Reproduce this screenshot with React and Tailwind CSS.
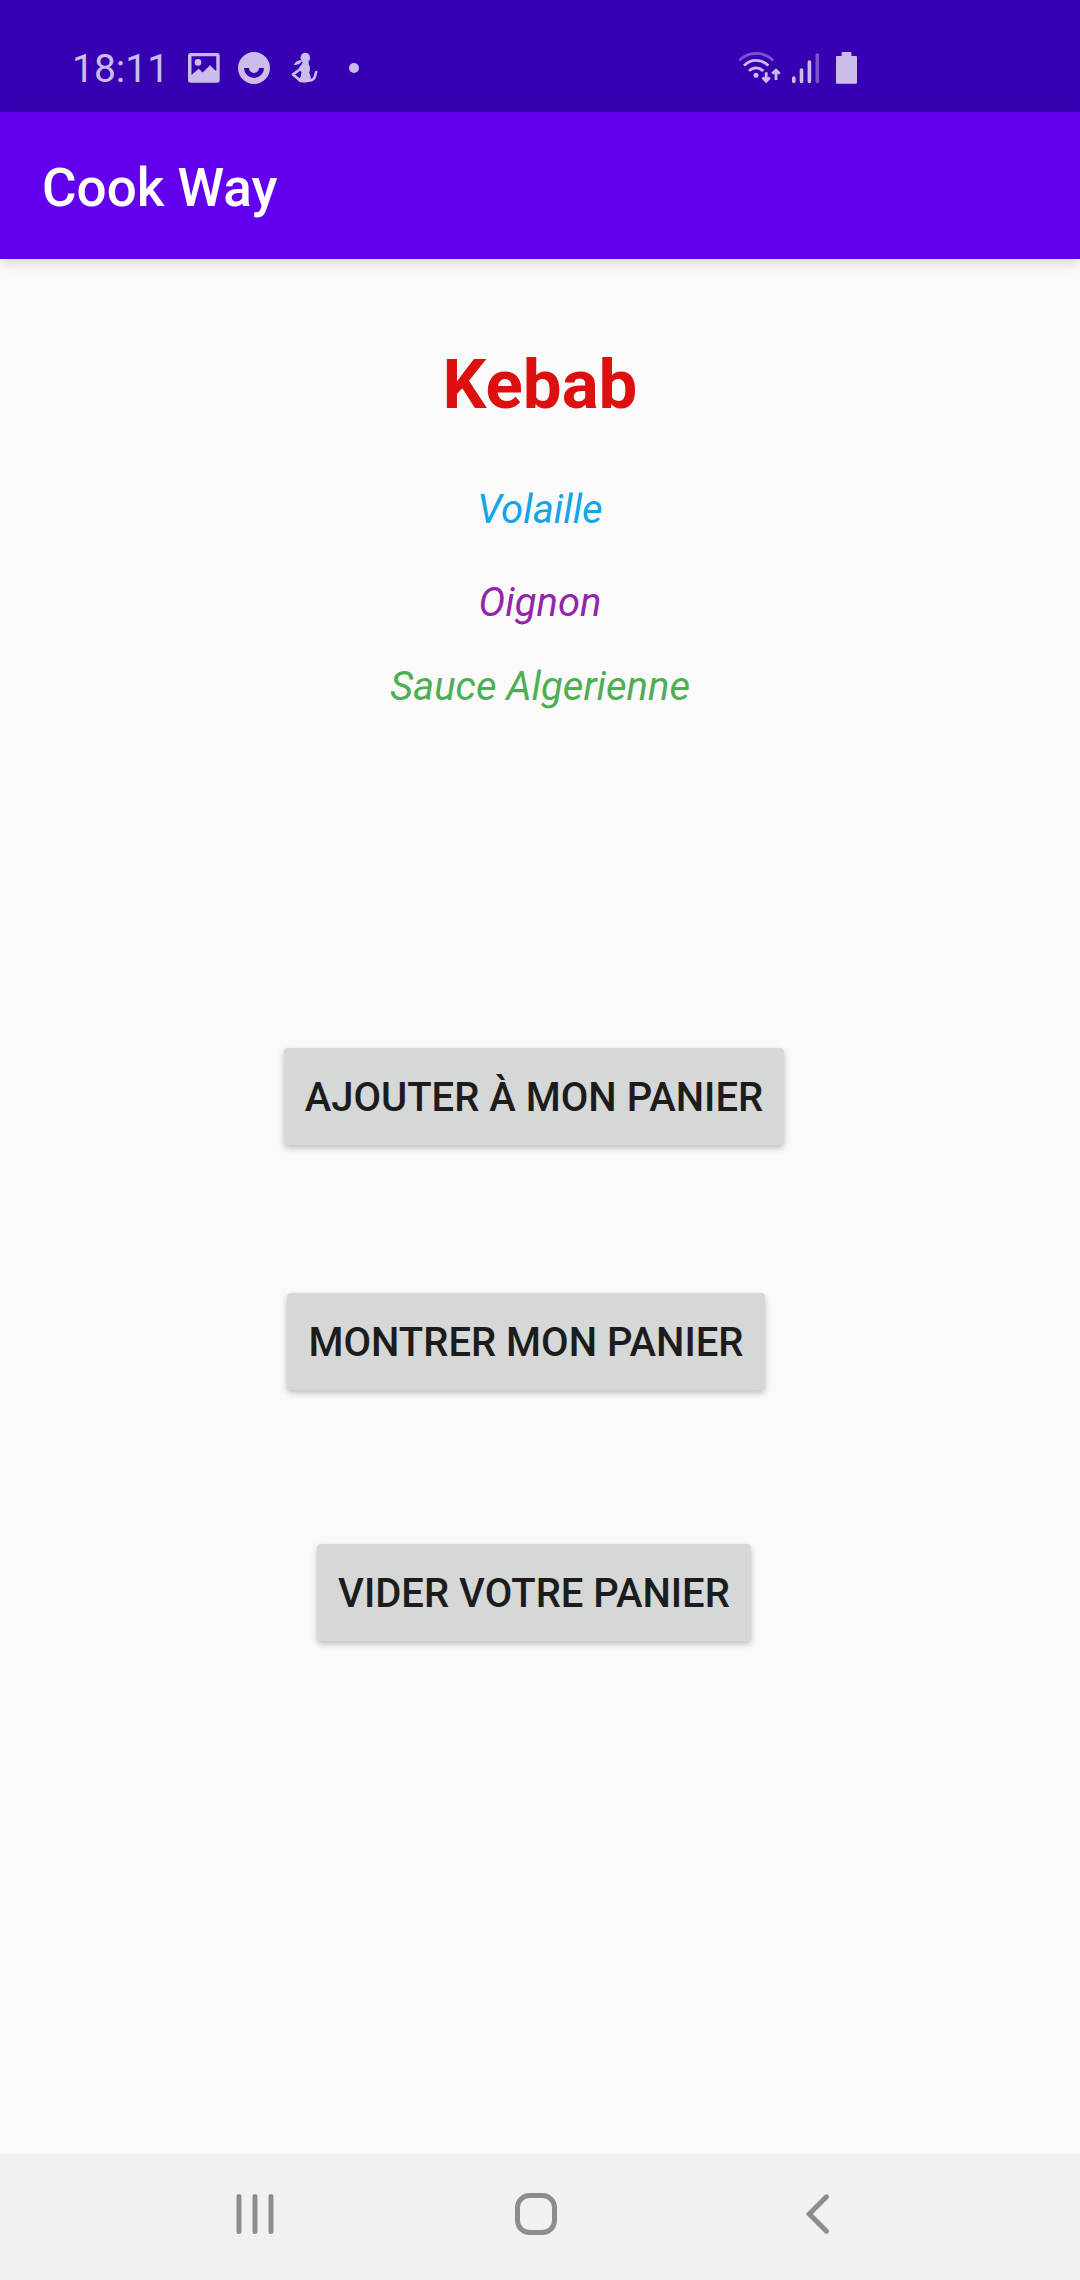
import React from "react";

function StatusBar() {
  return (
    <div className="flex h-28 items-center justify-between bg-[#3700b3] pt-6 pr-[216px] pl-[72px] text-[#cbbdea]">
      <div className="flex items-center gap-[18px]">
        <span className="pt-0.5 pr-px text-[39px] leading-[44px]">18:11</span>
        <svg className="size-8" viewBox="0 0 32 32" fill="currentColor" aria-hidden="true">
          <path
            fillRule="evenodd"
            d="M3 1H29Q31.7 1 31.7 4V28Q31.7 30.7 29 30.7H3Q0 30.7 0 28V4Q0 1 3 1ZM3.5 4.3V23L10.7 16.7L14.7 20.5L22 13.2L28.3 19.2V4.3Z"
          />
          <circle cx="10" cy="10.4" r="3.3" />
        </svg>
        <svg className="size-8" viewBox="0 0 32 32" fill="currentColor" aria-hidden="true">
          <path
            fillRule="evenodd"
            d="M16 0A16 16 0 1 1 16 32A16 16 0 1 1 16 0ZM6 16A10 10 0 0 0 26 16H21A5 5 0 0 1 11 16Z"
          />
        </svg>
        <svg className="size-8" viewBox="0 0 32 32" fill="currentColor" aria-hidden="true">
          <ellipse cx="17.3" cy="5.8" rx="4.8" ry="5" />
          <path d="M13.5 8.2C10 7.8 7.2 9.8 5.8 13C8.5 13.4 11.5 12.2 13.8 9.8Z" />
          <path d="M14.6 9H20.4L20.8 12.4C22.8 15.6 22 18.4 21.2 20.5C21.8 23 23.2 24.2 22.8 27C22.4 29.6 20.5 30.5 17.5 30.5C14 30.5 11 30 9.8 28.4L12.8 24.5L13.4 20L10.6 17.2C11 14.2 14.8 13 14.6 9Z" />
          <path
            d="M12.5 17L5 22.4L12.5 28.8H19.5Q25.8 28.4 26.8 24.8L28.2 20"
            fill="none"
            stroke="currentColor"
            strokeWidth="2.6"
            strokeLinecap="round"
            strokeLinejoin="round"
          />
        </svg>
        <svg className="size-8" viewBox="0 0 32 32" fill="currentColor" aria-hidden="true">
          <circle cx="16" cy="16" r="5" />
        </svg>
      </div>
      <div className="flex items-center gap-2.5">
        <svg
          className="h-8 w-11"
          viewBox="0 0 44 32"
          fill="none"
          stroke="currentColor"
          strokeWidth="2.8"
          aria-hidden="true"
        >
          <path d="M1.3 8.6Q8 1.4 18 1.4T35.3 8.6" opacity="0.45" />
          <path d="M6 13.6Q11 8.4 18 8.4T30.4 13.6" />
          <path d="M11 18.9Q14 15.8 18 15.8T25.3 18.9" />
          <circle cx="18" cy="23.2" r="2.5" fill="currentColor" stroke="none" />
          <path d="M28.2 20.3V29M24.6 25.6L28.2 29.2L31.8 25.6" />
          <path d="M38 28V19M34.3 21.8L38 18.2L41.7 21.8" />
        </svg>
        <svg
          className="h-8 w-[30px]"
          viewBox="0 0 30 32"
          fill="none"
          stroke="currentColor"
          strokeWidth="3.6"
          strokeLinecap="round"
          aria-hidden="true"
        >
          <path d="M1.8 26V29.5M9.5 18V29.5M17.4 10V29.5" />
          <path d="M25.3 3V29.5" opacity="0.45" />
        </svg>
        <svg className="size-8" viewBox="0 0 32 32" fill="currentColor" aria-hidden="true">
          <path d="M10.6 0H18.6Q19.4 0 19.4 1V4H24Q25 4 25 5V30.8Q25 31.8 24 31.8H5Q4 31.8 4 30.8V5Q4 4 5 4H9.6V1Q9.6 0 10.6 0Z" />
        </svg>
      </div>
    </div>
  );
}

function BasketButton({ className = "", children }) {
  return (
    <button
      type="button"
      className={`rounded bg-[#d6d7d7] px-[21px] pt-[25px] pb-[22px] text-[40px] leading-[50px] font-medium text-[#1c1c1c] uppercase shadow-[0_3px_6px_rgba(0,0,0,0.24)] ${className}`}
    >
      {children}
    </button>
  );
}

function NavigationBar() {
  return (
    <nav className="flex h-[126px] items-center bg-[#f1f1f1] pr-[123px] pb-1.5 pl-[114px] text-[#8d8d8d]">
      <button type="button" aria-label="Applications récentes" className="flex flex-1 justify-center">
        <svg className="size-11" viewBox="0 0 44 44" fill="none" stroke="currentColor" strokeWidth="5" strokeLinecap="round">
          <path d="M6 4.5V39.5M22 4.5V39.5M38 4.5V39.5" />
        </svg>
      </button>
      <button type="button" aria-label="Accueil" className="flex flex-1 justify-center">
        <svg className="size-11" viewBox="0 0 44 44" fill="none" stroke="currentColor" strokeWidth="5">
          <rect x="3.5" y="3.5" width="37" height="37" rx="12" />
        </svg>
      </button>
      <button type="button" aria-label="Retour" className="flex flex-1 justify-center">
        <svg className="size-11" viewBox="0 0 44 44" fill="none" stroke="currentColor" strokeWidth="5" strokeLinecap="round">
          <path d="M31.5 4.8L14.3 22L31.5 39.2" />
        </svg>
      </button>
    </nav>
  );
}

export default function App() {
  return (
    <div className="flex min-h-screen flex-col bg-[#fafafa] font-['Roboto',sans-serif]">
      <StatusBar />
      <header className="flex h-[147px] items-center bg-[#6200ee] px-[42px] pt-1 shadow-[0_4px_12px_rgba(0,0,0,0.14)]">
        <h1 className="text-[53px] leading-[64px] font-medium text-white">Cook Way</h1>
      </header>
      <main className="flex flex-1 flex-col pt-[85px]">
        <section className="flex flex-col items-center text-[40px] leading-[48px] italic">
          <h2 className="text-[69px] leading-[82px] font-bold text-[#dd0f0f] not-italic">Kebab</h2>
          <p className="mt-[60px] text-[#12a5ea]">Volaille</p>
          <p className="mt-[45px] text-[#9127a8]">Oignon</p>
          <p className="mt-9 text-[#4fae53]">Sauce Algerienne</p>
        </section>
        <section className="mt-[337px] flex flex-col items-center pr-3">
          <BasketButton>Ajouter à mon panier</BasketButton>
          <BasketButton className="mt-[148px] mr-4">Montrer mon panier</BasketButton>
          <BasketButton className="mt-[154px]">Vider votre panier</BasketButton>
        </section>
      </main>
      <NavigationBar />
    </div>
  );
}
